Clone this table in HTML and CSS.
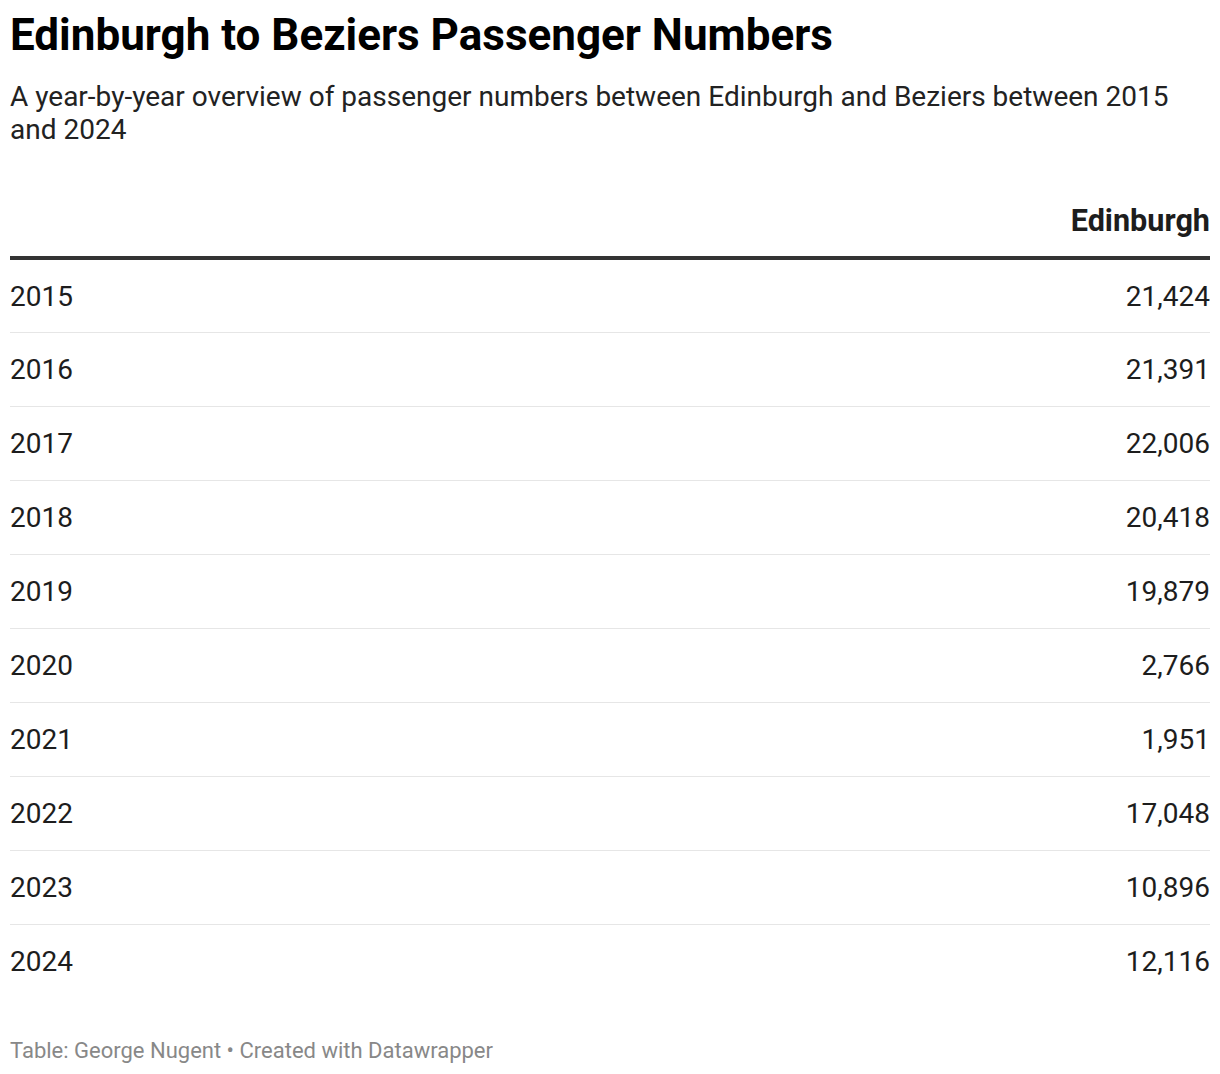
FILE: index.html
```html
<!DOCTYPE html>
<html>
<head>
<meta charset="utf-8">
<link rel="stylesheet" href="styles.css">
</head>
<body>
<div class="chart">
  <h1 class="title">Edinburgh to Beziers Passenger Numbers</h1>
  <p class="subtitle">A year-by-year overview of passenger numbers between Edinburgh and Beziers between 2015 and 2024</p>
  <table class="data">
    <thead>
      <tr><th class="year"></th><th class="num">Edinburgh</th></tr>
    </thead>
    <tbody>
      <tr><td class="year">2015</td><td class="num">21,424</td></tr>
      <tr><td class="year">2016</td><td class="num">21,391</td></tr>
      <tr><td class="year">2017</td><td class="num">22,006</td></tr>
      <tr><td class="year">2018</td><td class="num">20,418</td></tr>
      <tr><td class="year">2019</td><td class="num">19,879</td></tr>
      <tr><td class="year">2020</td><td class="num">2,766</td></tr>
      <tr><td class="year">2021</td><td class="num">1,951</td></tr>
      <tr><td class="year">2022</td><td class="num">17,048</td></tr>
      <tr><td class="year">2023</td><td class="num">10,896</td></tr>
      <tr><td class="year">2024</td><td class="num">12,116</td></tr>
    </tbody>
  </table>
  <div class="footer">Table: George Nugent • Created with Datawrapper</div>
</div>
</body>
</html>
```
FILE: styles.css
```css
html, body {
  margin: 0;
  padding: 0;
  background: #fff;
}
body {
  font-family: Roboto, "Liberation Sans", sans-serif;
  color: #1d1d1d;
}
.chart {
  padding: 10px 10px 0 10px;
}
.title {
  margin: 0;
  font-size: 44px;
  line-height: 50px;
  font-weight: 700;
  color: #000;
}
.subtitle {
  margin: 20px 0 0 0;
  font-size: 28px;
  line-height: 33px;
  color: #222;
}
.data {
  width: 100%;
  border-collapse: collapse;
  margin-top: 57px;
}
.data th {
  font-size: 30.6px;
  font-weight: 700;
  line-height: 36px;
  padding: 0 0 17px 0;
  border-bottom: 4px solid #333;
  color: #1d1d1d;
}
.data td {
  font-size: 28px;
  line-height: 34px;
  height: 74px;
  padding: 2px 0 0 0;
  box-sizing: border-box;
  border-bottom: 1px solid #e6e6e6;
  color: #1d1d1d;
}
.data tbody tr:last-child td {
  border-bottom: none;
}
.year {
  text-align: left;
}
.num {
  text-align: right;
}
.footer {
  margin-top: 40px;
  font-size: 22px;
  line-height: 26px;
  color: #888;
}
```
